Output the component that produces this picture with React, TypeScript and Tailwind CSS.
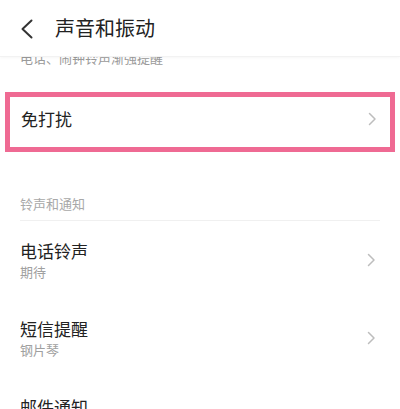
const font = { fontFamily: '"Noto Sans CJK SC", "Noto Sans", sans-serif' };

const Chevron = () => (
  <svg width="9" height="14" viewBox="0 0 9 14" fill="none">
    <path d="M1.5 1.5l5.5 5.5-5.5 5.5" stroke="#bdbdbd" strokeWidth="1.5" strokeLinecap="round" strokeLinejoin="round" />
  </svg>
);

type Row = { title: string; sub: string };

const rows: Row[] = [
  { title: "电话铃声", sub: "期待" },
  { title: "短信提醒", sub: "钢片琴" },
  { title: "邮件通知", sub: "默认" },
];

export default function App() {
  return (
    <div className="w-[400px] h-[409px] overflow-hidden bg-white flex flex-col" style={font}>
      {/* header */}
      <div className="h-[57px] shrink-0 flex items-center pl-5 gap-[21px] bg-white border-b border-[#f2f2f2] shadow-[0_1px_3px_rgba(0,0,0,0.04)] relative z-10">
        <svg width="14" height="20" viewBox="0 0 14 20" fill="none" className="mt-[2px]">
          <path d="M11.5 1.5L2.5 10l9 8.5" stroke="#333" strokeWidth="2" strokeLinecap="round" strokeLinejoin="round" />
        </svg>
        <div className="text-[20px] leading-7 text-[#222] mb-[1px]">声音和振动</div>
      </div>

      {/* content */}
      <div className="flex-1 overflow-hidden">
        <div className="-mt-[8px] px-5 text-[13px] leading-[18px] text-[#9a9a9a]">电话、闹钟铃声渐强提醒</div>

        <div className="mx-[5px] mt-[25px] h-[60px] border-[5px] border-[#ef6a93] flex items-center justify-between pl-[11px] pr-[13px] pb-[6px]">
          <div className="text-[17px] leading-[22px] text-[#222]">免打扰</div>
          <Chevron />
        </div>

        <div className="mx-5 mt-[43px] pb-[7px] border-b border-[#f0f0f0] text-[13px] leading-[18px] text-[#a8a8a8]">铃声和通知</div>

        {rows.map((r) => (
          <div key={r.title} className="h-[78px] flex items-center justify-between pl-5 pr-[24px]">
            <div className="flex flex-col">
              <div className="text-[17px] leading-[22px] text-[#222]">{r.title}</div>
              <div className="mt-[1px] text-[13px] leading-[18px] text-[#a0a0a0]">{r.sub}</div>
            </div>
            <Chevron />
          </div>
        ))}
      </div>
    </div>
  );
}
